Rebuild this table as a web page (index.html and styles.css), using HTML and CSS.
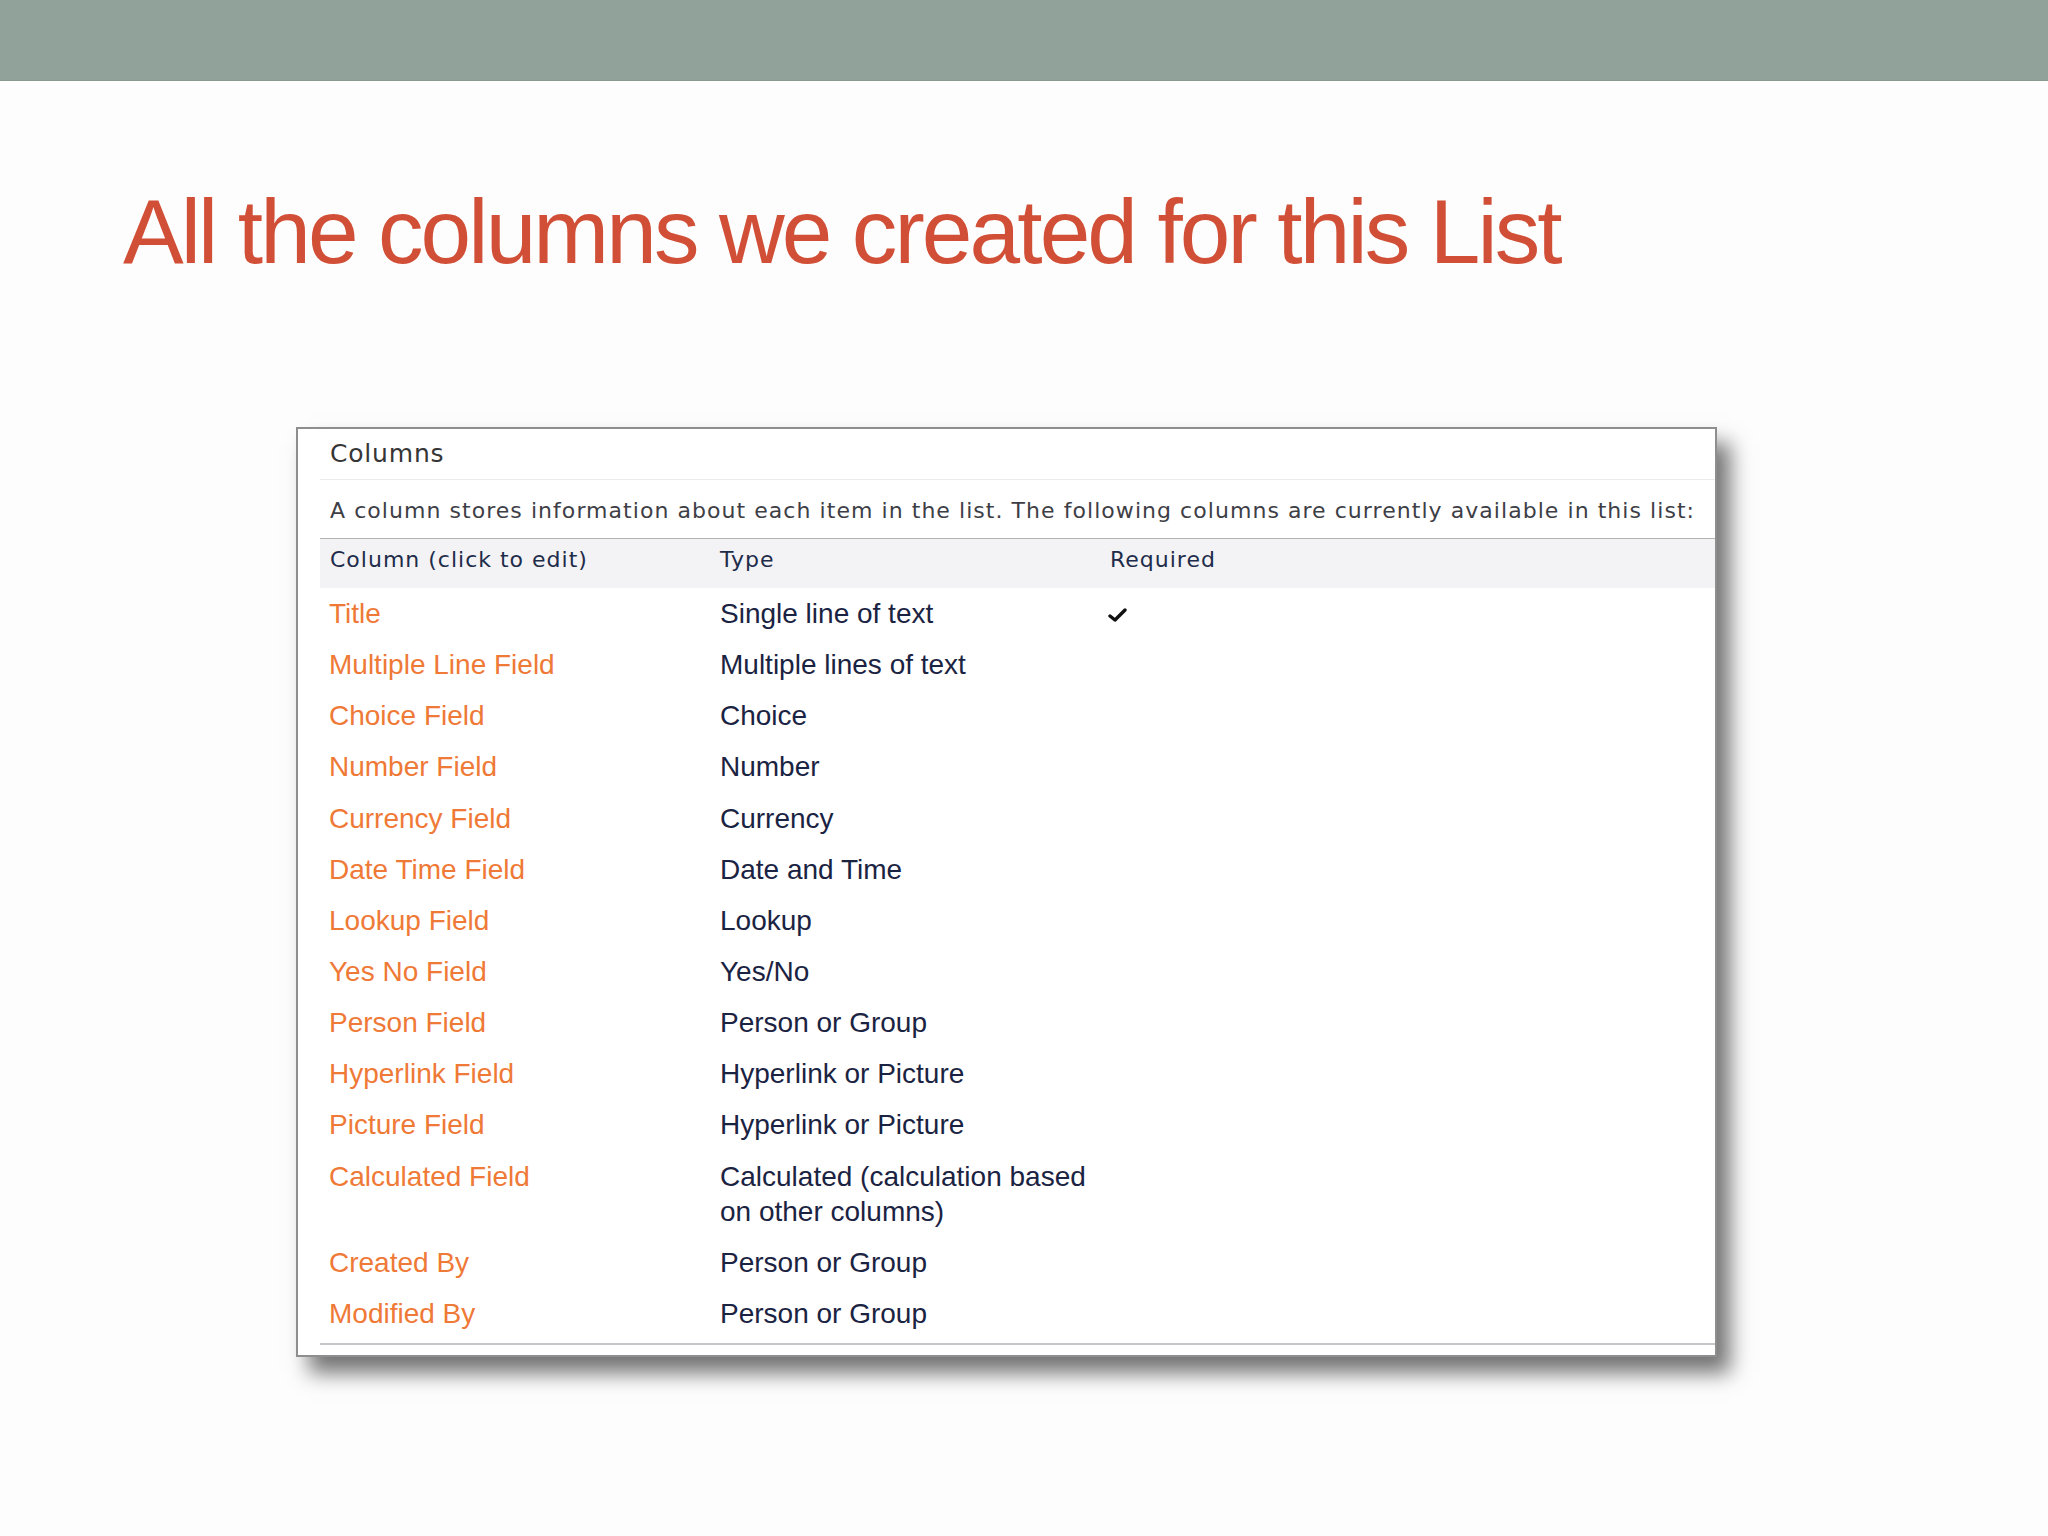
FILE: index.html
```html
<!DOCTYPE html>
<html lang="en">
<head>
<meta charset="utf-8">
<title>All the columns we created for this List</title>
<link rel="stylesheet" href="styles.css">
</head>
<body>
<header class="topbar"></header>
<h1 class="slide-title">All the columns we created for this List</h1>
<section class="panel">
  <div class="panel-title">Columns</div>
  <div class="panel-desc">A column stores information about each item in the list. The following columns are currently available in this list:</div>
  <div class="grid">
    <div class="hcell">Column (click to edit)</div>
    <div class="hcell">Type</div>
    <div class="hcell">Required</div>

    <div class="cell name">Title</div>
    <div class="cell type">Single line of text</div>
    <div class="cell req"><svg class="check" width="20" height="16" viewBox="0 0 20 16"><path d="M2 9 L7 13 L17 3" fill="none" stroke="#111" stroke-width="3.4" stroke-linecap="round" stroke-linejoin="round"/></svg></div>

    <div class="cell name">Multiple Line Field</div>
    <div class="cell type">Multiple lines of text</div>
    <div class="cell req"></div>

    <div class="cell name">Choice Field</div>
    <div class="cell type">Choice</div>
    <div class="cell req"></div>

    <div class="cell name">Number Field</div>
    <div class="cell type">Number</div>
    <div class="cell req"></div>

    <div class="cell name">Currency Field</div>
    <div class="cell type">Currency</div>
    <div class="cell req"></div>

    <div class="cell name">Date Time Field</div>
    <div class="cell type">Date and Time</div>
    <div class="cell req"></div>

    <div class="cell name">Lookup Field</div>
    <div class="cell type">Lookup</div>
    <div class="cell req"></div>

    <div class="cell name">Yes No Field</div>
    <div class="cell type">Yes/No</div>
    <div class="cell req"></div>

    <div class="cell name">Person Field</div>
    <div class="cell type">Person or Group</div>
    <div class="cell req"></div>

    <div class="cell name">Hyperlink Field</div>
    <div class="cell type">Hyperlink or Picture</div>
    <div class="cell req"></div>

    <div class="cell name">Picture Field</div>
    <div class="cell type">Hyperlink or Picture</div>
    <div class="cell req"></div>

    <div class="cell name">Calculated Field</div>
    <div class="cell type">Calculated (calculation based<br>on other columns)</div>
    <div class="cell req"></div>

    <div class="cell name">Created By</div>
    <div class="cell type">Person or Group</div>
    <div class="cell req"></div>

    <div class="cell name">Modified By</div>
    <div class="cell type">Person or Group</div>
    <div class="cell req"></div>
  </div>
  <div class="panel-foot"></div>
</section>
</body>
</html>
```
FILE: styles.css
```css
html, body {
  margin: 0;
  padding: 0;
  background: #fdfdfd;
}

body {
  min-height: 1536px;
}

.topbar {
  height: 80px;
  background: #91a29a;
  border-bottom: 1px solid #8a9890;
}

.slide-title {
  margin: 105px 0 0 123px;
  font-family: "Liberation Sans", Arial, sans-serif;
  font-weight: normal;
  font-size: 91px;
  line-height: 91px;
  letter-spacing: -2.9px;
  color: #d24f37;
  white-space: nowrap;
}

.panel {
  box-sizing: border-box;
  margin: 150px 0 0 296px;
  width: 1421px;
  height: 930px;
  background: #ffffff;
  border: 2px solid #8e8e8e;
  padding: 0 0 0 22px;
  box-shadow: 13px 16px 20px rgba(0, 0, 0, 0.55);
}

.panel-title {
  height: 50px;
  line-height: 50px;
  padding-left: 10px;
  font-family: "DejaVu Sans", Verdana, sans-serif;
  font-size: 25px;
  letter-spacing: 0.8px;
  color: #363636;
  border-bottom: 1px solid #ececec;
}

.panel-desc {
  padding: 4px 0 0 10px;
  line-height: 54px;
  font-family: "DejaVu Sans", Verdana, sans-serif;
  font-size: 22px;
  letter-spacing: 1.05px;
  color: #3e3e46;
  white-space: nowrap;
  border-bottom: 1px solid #b2b2b2;
}

.grid {
  display: grid;
  grid-template-columns: 400px 390px 1fr;
}

.hcell {
  background: #f3f3f5;
  padding: 0 0 8px 10px;
  line-height: 41px;
  font-family: "DejaVu Sans", Verdana, sans-serif;
  font-size: 22px;
  letter-spacing: 1px;
  color: #1e2c4a;
}

.hcell + .hcell {
  padding-left: 0;
}

.cell {
  padding: 8px 0 8.15px 0;
  line-height: 35px;
  font-family: "Liberation Sans", Arial, sans-serif;
  font-size: 28px;
}

.name {
  padding-left: 9px;
  color: #ef7936;
}

.type {
  color: #1b2342;
}

.req {
  display: flex;
  align-items: center;
  height: 35px;
}

.check {
  margin-left: -2px;
  margin-top: 2px;
}

.panel-foot {
  margin-top: 4px;
  height: 0;
  border-top: 2px solid #c6c6ca;
}
```
